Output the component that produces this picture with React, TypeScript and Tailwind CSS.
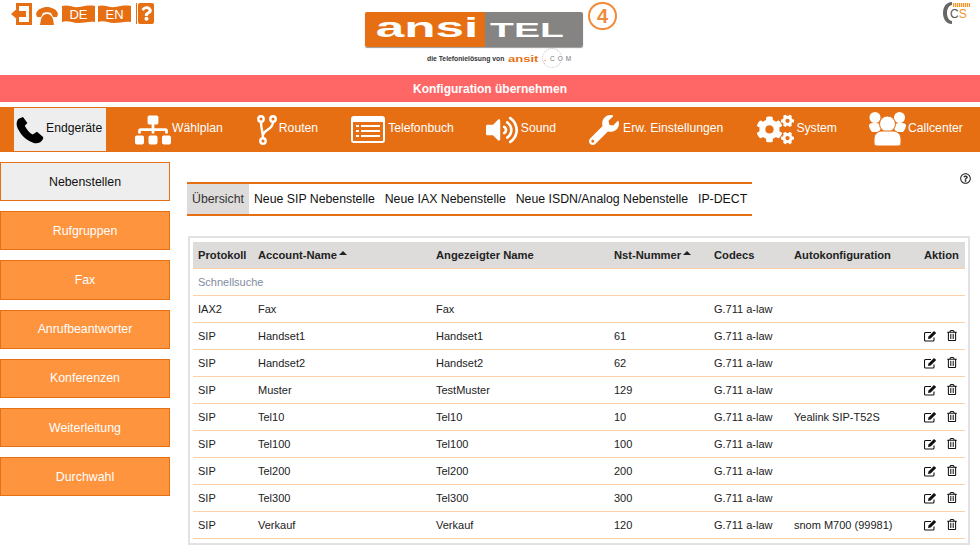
import React from 'react';
import { FaCogs, FaQuestion, FaRegQuestionCircle, FaRegTrashAlt, FaSitemap, FaVolumeUp, FaWrench } from 'react-icons/fa';

const sideItems = ['Nebenstellen', 'Rufgruppen', 'Fax', 'Anrufbeantworter', 'Konferenzen', 'Weiterleitung', 'Durchwahl'];
const tabs = ['Übersicht', 'Neue SIP Nebenstelle', 'Neue IAX Nebenstelle', 'Neue ISDN/Analog Nebenstelle', 'IP-DECT'];

const rows = [
  ['IAX2', 'Fax', 'Fax', '', 'G.711 a-law', ''],
  ['SIP', 'Handset1', 'Handset1', '61', 'G.711 a-law', ''],
  ['SIP', 'Handset2', 'Handset2', '62', 'G.711 a-law', ''],
  ['SIP', 'Muster', 'TestMuster', '129', 'G.711 a-law', ''],
  ['SIP', 'Tel10', 'Tel10', '10', 'G.711 a-law', 'Yealink SIP-T52S'],
  ['SIP', 'Tel100', 'Tel100', '100', 'G.711 a-law', ''],
  ['SIP', 'Tel200', 'Tel200', '200', 'G.711 a-law', ''],
  ['SIP', 'Tel300', 'Tel300', '300', 'G.711 a-law', ''],
  ['SIP', 'Verkauf', 'Verkauf', '120', 'G.711 a-law', 'snom M700 (99981)'],
];

function Handset({ className }: { className?: string }) {
  return (
    <svg viewBox="0 0 32 32" className={className} fill="currentColor">
      <path d="M8 1 L3 3 C0 6 0 11 3 16 C7 24 14 29 21 31 C25 32 29 30 31 26 L31 24 L24 18 L19 21 C15 19 12 15 10 11 L13 8 Z" />
    </svg>
  );
}

function ExitIcon() {
  return (
    <svg viewBox="0 0 21 22" className="w-[21px] h-[22px] text-[#e66f14]" fill="currentColor">
      <path d="M5 0h16v22H5v-6h3v3h10V3H8v3H5z" />
      <path d="M0 11l8-7v4h7v6H8v4z" />
    </svg>
  );
}

function OldPhone() {
  return (
    <svg viewBox="0 0 22 18" className="w-[22px] h-[18px] text-[#e66f14]" fill="currentColor">
      <path d="M0 7C1 2 7 0 11 0s10 2 11 7l-1 3h-4l-2-4c-2-1-6-1-8 0L5 10H1z" />
      <path d="M11 7c3 0 5 2 6 5l1 6H4l1-6c1-3 3-5 6-5z" />
    </svg>
  );
}

function Flag({ label }: { label: string }) {
  return (
    <div className="relative w-[33px] h-[18px]">
      <svg viewBox="0 0 33 18" className="absolute inset-0 w-[33px] h-[18px] text-[#e66f14]" fill="currentColor">
        <path d="M0 1c6-2 11 2 17 1s10-2 16-1v16c-6-1-11 1-17 1S6 15 0 17z" />
      </svg>
      <span className="absolute inset-0 flex items-center justify-center text-white text-[13px] leading-none">{label}</span>
    </div>
  );
}

function RouteIcon() {
  return (
    <svg viewBox="0 0 20 30" className="w-[20px] h-[30px] text-white" fill="none" stroke="currentColor" strokeWidth="2.4">
      <circle cx="4" cy="4" r="2.7" />
      <circle cx="16" cy="4" r="2.7" />
      <circle cx="6" cy="26" r="2.7" />
      <path d="M4 7c0 6 2 11 2 16M16 7c0 8-9 7-10 13" />
    </svg>
  );
}

function BookIcon() {
  return (
    <svg viewBox="0 0 34 27" className="w-[34px] h-[27px]">
      <rect width="34" height="27" rx="3" fill="#ffffff" />
      <rect x="2" y="6" width="30" height="19" fill="#e66f14" />
      <g fill="#ffffff">
        <rect x="5" y="9" width="3" height="2" />
        <rect x="5" y="14" width="3" height="2" />
        <rect x="5" y="19" width="3" height="2" />
        <rect x="10" y="9" width="19" height="2" />
        <rect x="10" y="14" width="19" height="2" />
        <rect x="10" y="19" width="19" height="2" />
      </g>
    </svg>
  );
}

function UsersIcon() {
  return (
    <svg viewBox="0 0 37 35" className="w-[37px] h-[35px]" fill="#ffffff">
      <circle cx="6" cy="5.5" r="5.5" />
      <circle cx="30.5" cy="5.5" r="5.5" />
      <path d="M0 13c1-2 3-2 6-2s6 1 7 3l-3 6H3c-2-2-3-5-3-7zM37 13c-1-2-3-2-6-2s-6 1-7 3l3 6h7c2-2 3-5 3-7z" />
      <circle cx="18.5" cy="12" r="8" stroke="#e66f14" strokeWidth="1" />
      <path d="M5 27c0-5 4-8 8-8h11c4 0 8 3 8 8v4c0 2-1 3-3 3H8c-2 0-3-1-3-3z" stroke="#e66f14" strokeWidth="1" />
    </svg>
  );
}

function EditIcon() {
  return (
    <svg viewBox="0 0 13 12" className="w-[13px] h-[12px] text-[#111]" fill="none" stroke="currentColor">
      <path d="M10 7.5V10a1 1 0 01-1 1H1.5a1 1 0 01-1-1V3.5a1 1 0 011-1H7" strokeWidth="1.1" />
      <path d="M4.5 6.5L10 1l2.2 2L6.7 8.5 4 9z" fill="currentColor" stroke="none" />
    </svg>
  );
}

const navItems = [
  { label: 'Endgeräte', cls: 'w-[92px] ml-[14px] pl-[2px] gap-[2px] bg-[#eeeeee] text-[#111]', icon: <Handset className="w-[28px] h-[28px] text-black" /> },
  { label: 'Wählplan', cls: 'ml-[29px] gap-[1px]', icon: <FaSitemap className="w-[36px] h-[36px] text-white" /> },
  { label: 'Routen', cls: 'ml-[34px] gap-[2px]', icon: <RouteIcon /> },
  { label: 'Telefonbuch', cls: 'ml-[33px] gap-[3px]', icon: <BookIcon /> },
  { label: 'Sound', cls: 'ml-[32px] gap-[3px]', icon: <FaVolumeUp className="w-[32px] h-[32px] text-white" /> },
  { label: 'Erw. Einstellungen', cls: 'ml-[33px] gap-[4px]', icon: <FaWrench className="w-[30px] h-[30px] text-white" /> },
  { label: 'System', cls: 'ml-[34px] gap-[2px]', icon: <FaCogs className="w-[37px] h-[37px] text-white" /> },
  { label: 'Callcenter', cls: 'ml-[32px] gap-[2px]', icon: <UsersIcon /> },
];

function Logo() {
  return (
    <div className="w-[218px]">
      <div className="flex h-[35px] rounded-[2px] overflow-hidden shadow-[0_1px_1px_#999]">
        <div className="w-[120px] bg-[#e66f14] flex items-center justify-center pb-[3px] pl-[4px]">
          <span className="text-white font-bold text-[27px] leading-none scale-x-[1.9]">ansi</span>
        </div>
        <div className="flex-1 bg-[#858482] flex items-center justify-center pr-[14px]">
          <span className="text-white font-bold text-[20px] leading-none scale-x-[1.95]">TEL</span>
        </div>
      </div>
      <div className="flex items-center mt-[6px] h-[12px] pl-[62px] whitespace-nowrap">
        <span className="text-[6.8px] font-bold text-[#333]">die Telefonielösung von</span>
        <span className="text-[9px] font-bold text-[#e66f14] ml-[4px] w-[33px] scale-x-[1.45] origin-left leading-none">ansit</span>
        <span className="relative text-[6.5px] text-[#777] ml-[3px] tracking-[3px]">
          <span className="absolute left-[-2px] top-[-6px] w-[20px] h-[20px] rounded-full border border-dotted border-[#bbb]" />
          <span className="text-[#e66f14] font-bold mr-[1px]">.</span>COM
        </span>
      </div>
    </div>
  );
}

function App() {
  return (
    <div className="w-[980px] h-[560px] overflow-hidden bg-white font-['Liberation_Sans',Arial,sans-serif]">
      {/* Kopf */}
      <div className="h-[75px] flex items-start">
        <div className="w-[350px] flex items-start pl-[11px] pt-[3px]">
          <ExitIcon />
          <div className="ml-[4px] mt-[4px]">
            <OldPhone />
          </div>
          <div className="ml-[4px] mt-[2px] flex gap-[3px]">
            <Flag label="DE" />
            <Flag label="EN" />
          </div>
          <div className="ml-[5px] w-[18px] h-[21px] flex">
            <div className="w-[1px] bg-[#e66f14]" />
            <div className="ml-[1px] flex-1 bg-[#e66f14] rounded-[2px] flex items-center justify-center">
              <FaQuestion className="w-[11px] h-[15px] text-white" />
            </div>
          </div>
        </div>
        <div className="ml-[15px] mt-[12px]">
          <Logo />
        </div>
        <div className="ml-[5px] mt-[2px] w-[29px] h-[28px] rounded-full border-[2.5px] border-[#f08a3c] flex items-center justify-center text-[#f08a3c] font-bold text-[20px] leading-none">
          4
        </div>
        <div className="flex-1 flex justify-end">
          <div className="flex mr-[10px] mt-[2px] h-[22px] items-start">
            <svg viewBox="0 0 10 22" className="w-[10px] h-[22px] text-[#666]" fill="currentColor">
              <path d="M9 0C3 0 0 5 0 11s3 11 9 11v-3C6 19 4 15 4 11s2-8 5-8z" />
            </svg>
            <div>
              <div className="w-[17px] h-[4px] mt-[1px] bg-[repeating-linear-gradient(90deg,#f7941d_0,#f7941d_1px,#fde3c4_1px,#fde3c4_2px)]" />
              <div className="-ml-[3px] text-[12px] leading-[13px] mt-[1px]">
                <span className="text-[#555]">C</span>
                <span className="text-[#f7941d]">S</span>
              </div>
            </div>
          </div>
        </div>
      </div>

      <div className="h-[27px] bg-[#ff6666] flex items-center justify-center text-white text-[12px] font-bold">
        Konfiguration übernehmen
      </div>

      {/* Hauptmenü */}
      <div className="mt-[5px] h-[45px] bg-[#e66f14] flex items-center text-[12.2px] text-white">
        {navItems.map((item, i) => (
          <div key={i} className={`flex items-center h-[43px] ${item.cls}`}>
            {item.icon}
            <span className="pb-[3px]">{item.label}</span>
          </div>
        ))}
      </div>

      <div className="flex mt-[10px]">
        {/* Seitenmenü */}
        <div className="w-[170px] flex flex-col gap-[10px] shrink-0">
          {sideItems.map((item, i) => (
            <div
              key={item}
              className={`h-[39.2px] pt-[0.5px] border border-[#e66f14] flex items-center justify-center text-[12.35px] ${i === 0 ? 'bg-[#eeeeee] text-[#111]' : 'bg-[#ff943e] text-white'}`}
            >
              {item}
            </div>
          ))}
        </div>

        <div className="flex-1 relative pl-[17px] pt-[20px]">
          <FaRegQuestionCircle className="absolute right-[9px] top-[11px] w-[11px] h-[11px] text-[#222]" />

          <div className="w-[565px] h-[34px] border-y-2 border-[#e66f14] flex text-[12.3px] text-[#111] whitespace-nowrap">
            {tabs.map((tab, i) => (
              <div key={tab} className={`flex items-center shrink-0 px-[5px] ${i === 0 ? 'bg-[#dddcdb] text-[#333]' : ''}`}>
                {tab}
              </div>
            ))}
          </div>

          <div className="w-[782px] ml-[1px] mt-[20px] border-2 border-[#e2e2e2] border-b-0 pt-[4px] px-[3px]">
            <table className="w-[772px] table-fixed border-collapse text-[11px] text-[#222]">
              <colgroup>
                <col className="w-[60px]" />
                <col className="w-[178px]" />
                <col className="w-[178px]" />
                <col className="w-[100px]" />
                <col className="w-[80px]" />
                <col className="w-[130px]" />
                <col className="w-[46px]" />
              </colgroup>
              <thead>
                <tr className="h-[26px] bg-[#dddcdb] border-b border-[#fdd0a8] text-left text-[11.2px] font-bold">
                  <th className="pl-[5px] pt-[1px]">Protokoll</th>
                  <th className="pl-[5px] pt-[1px]">
                    Account-Name
                    <span className="inline-block align-[4px] ml-[2px] border-x-[4px] border-b-[4px] border-x-transparent border-b-[#222]" />
                  </th>
                  <th className="pl-[5px] pt-[1px]">Angezeigter Name</th>
                  <th className="pl-[5px] pt-[1px]">
                    Nst-Nummer
                    <span className="inline-block align-[4px] ml-[2px] border-x-[4px] border-b-[4px] border-x-transparent border-b-[#222]" />
                  </th>
                  <th className="pl-[5px] pt-[1px]">Codecs</th>
                  <th className="pl-[5px] pt-[1px]">Autokonfiguration</th>
                  <th className="pl-[5px] pt-[1px]">Aktion</th>
                </tr>
              </thead>
              <tbody>
                <tr className="h-[27px] border-b border-[#fdd0a8]">
                  <td colSpan={7} className="pl-[5px] pt-[2px] text-[#7f8c9f]">Schnellsuche</td>
                </tr>
                {rows.map((r, i) => (
                  <tr key={i} className="h-[27px] border-b border-[#fdd0a8]">
                    {r.map((c, j) => (
                      <td key={j} className="pl-[5px] pt-[2px] whitespace-nowrap">{c}</td>
                    ))}
                    <td className="pl-[5px]">
                      {i > 0 && (
                        <div className="flex items-center gap-[10px] text-[#111]">
                          <EditIcon />
                          <FaRegTrashAlt className="w-[10px] h-[11px]" />
                        </div>
                      )}
                    </td>
                  </tr>
                ))}
              </tbody>
            </table>
            <div className="h-[6px] border-b-2 border-[#e2e2e2] -mx-[5px]" />
          </div>
        </div>
      </div>
    </div>
  );
}

export default App;
